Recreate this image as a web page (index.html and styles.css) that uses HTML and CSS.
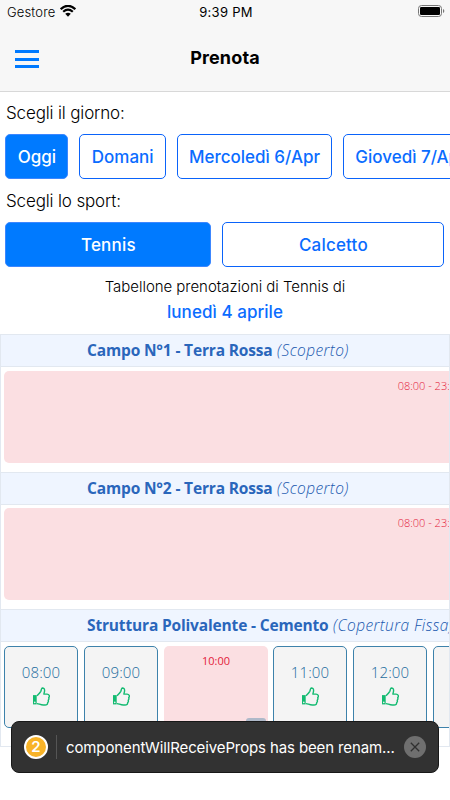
FILE: index.html
```html
<!DOCTYPE html>
<html lang="it">
<head>
<meta charset="utf-8">
<title>Prenota</title>
<link rel="stylesheet" href="styles.css">
</head>
<body>
<svg class="defs" aria-hidden="true">
  <symbol id="thumb" viewBox="0 0 18 19">
    <path d="M1 8.1h3.7v9.3H1z" fill="currentColor"/>
    <circle cx="2.8" cy="15.4" r=".8" fill="#f4f4f4"/>
    <path d="M5 16.600c2 0 3.300 1.400 6.300 1.400h1.700c1.800 0 2.700-.8 2.600-2.300 .8-.6 1-1.500.6-2.400 .8-.8.9-1.700.5-2.600 1.300-1.500.4-3.600-1.600-3.600h-3.300c.4-1.300.8-2.200.8-3.500 0-1.800-.9-2.700-2.500-2.600-.9.700-.8 2.300-1.300 3.300C7.900 5.800 6.500 7.200 5 8.700" fill="none" stroke="currentColor" stroke-width="1.4" stroke-linejoin="round"/>
  </symbol>
</svg>
<header class="top">
  <div class="status">
    <div class="carrier"><span>Gestore</span>
      <svg width="16" height="12" viewBox="0 0 16 12"><path d="M.7 4.200Q8-2.600 15.300 4.200M3.200 6.800Q8 2.500 12.800 6.800" fill="none" stroke="#000" stroke-width="2.200"/><path d="M5.200 8.800Q8 6.500 10.800 8.800L8 11.700z"/></svg>
    </div>
    <span class="clock">9:39 PM</span>
    <svg class="battery" width="27" height="12" viewBox="0 0 27 12"><rect x=".5" y=".5" width="23" height="11" rx="3" fill="none" stroke="#777"/><rect x="2" y="2" width="20" height="8" rx="1.300"/><path d="M25 4v4q1.300-.5 1.300-2T25 4z" fill="#777"/></svg>
  </div>
  <div class="nav">
    <div class="menu"><i></i><i></i><i></i></div>
    <h1>Prenota</h1>
  </div>
</header>
<main>
  <p class="label day-label"><span>Scegli il giorno:</span></p>
  <div class="days">
    <button class="btn on oggi"><span>Oggi</span></button>
    <button class="btn domani"><span>Domani</span></button>
    <button class="btn merc"><span>Mercoledì 6/Apr</span></button>
    <button class="btn giov"><span>Giovedì 7/Apr</span></button>
  </div>
  <p class="label sport-label"><span>Scegli lo sport:</span></p>
  <div class="sports">
    <button class="btn on"><span>Tennis</span></button>
    <button class="btn"><span>Calcetto</span></button>
  </div>
  <p class="caption"><span>Tabellone prenotazioni di Tennis di</span></p>
  <p class="date"><span>lunedì 4 aprile</span></p>
  <div class="board">
    <section class="court first">
      <h2><span><b>Campo N°1 - Terra Rossa</b> <em>(Scoperto)</em></span></h2>
      <div class="slots"><div class="busy full">08:00 - 23:00</div></div>
    </section>
    <section class="court">
      <h2><span><b>Campo N°2 - Terra Rossa</b> <em>(Scoperto)</em></span></h2>
      <div class="slots"><div class="busy full">08:00 - 23:00</div></div>
    </section>
    <section class="court">
      <h2><span><b>Struttura Polivalente - Cemento</b> <em>(Copertura Fissa)</em></span></h2>
      <div class="slots">
        <div class="free"><span>08:00</span><svg><use href="#thumb"/></svg></div>
        <div class="free"><span>09:00</span><svg><use href="#thumb"/></svg></div>
        <div class="busy hour">10:00<i class="tag"></i></div>
        <div class="free"><span>11:00</span><svg><use href="#thumb"/></svg></div>
        <div class="free"><span>12:00</span><svg><use href="#thumb"/></svg></div>
        <div class="free"><span>13:00</span><svg><use href="#thumb"/></svg></div>
      </div>
    </section>
  </div>
</main>
<div class="toast">
  <span class="count">2</span>
  <span class="rule"></span>
  <span class="msg">componentWillReceiveProps has been renam...</span>
  <svg width="22" height="22" viewBox="0 0 22 22"><circle cx="11" cy="11" r="11" fill="#6f6f6f"/><path d="M6.800 6.800l8.400 8.400M15.200 6.800l-8.400 8.400" stroke="#303030" stroke-width="1.300"/></svg>
</div>
</body>
</html>
```
FILE: styles.css
```css
* { box-sizing: border-box; }
body { margin: 0; width: 450px; height: 800px; overflow: hidden; position: relative; background: #fff; color: #000; font-family: Inter, "Liberation Sans", sans-serif; }
p, h1, h2 { margin: 0; font-weight: 400; }
svg { display: block; flex: none; }
.defs { position: absolute; width: 0; height: 0; }
.top { height: 92px; background: #f7f7f7; border-bottom: 1px solid #d8d8d8; }
.status { height: 23px; display: grid; grid-template-columns: 1fr auto 1fr; align-items: center; padding: 0 5px 0 7px; font-size: 13px; }
.carrier { display: flex; gap: 5px; align-items: center; font-weight: 350; letter-spacing: .15px; }
.carrier svg { margin-top: -2px; }
.clock { letter-spacing: .3px; font-weight: 400; }
.battery { justify-self: end; margin-top: -1px; }
.nav { height: 68px; display: grid; grid-template-columns: 1fr auto 1fr; align-items: center; padding: 0 15px; }
.menu { display: flex; flex-direction: column; gap: 4.500px; width: 24px; margin-top: 4px; }
.menu i { height: 3px; background: #007aff; }
h1 { font-size: 18px; font-weight: 650; letter-spacing: .15px; }
.label { padding-left: 6px; font-size: 17px; font-weight: 350; line-height: 22px; letter-spacing: -.15px; }
.day-label { margin-top: 10px; }
.days { display: flex; gap: 11px; padding-left: 5.400px; margin-top: 10px; overflow: hidden; }
.btn { height: 45px; flex: none; padding: 0; border: 1px solid #0a63fa; border-radius: 5px; background: #fff; color: #0a6cff; font: 500 17px Inter, sans-serif; white-space: nowrap; }
.btn.on { background: #007aff; color: #fff; border-color: #3c87ff; }
.oggi { width: 63px; }
.domani { width: 86.600px; }
.merc { width: 155px; }
.giov { width: 135px; }
.sport-label { margin-top: 11px; }
.sports { display: grid; grid-template-columns: 206px 222px; gap: 11px; padding-left: 5.400px; margin-top: 10px; }
.sports .btn { letter-spacing: .2px; }
.caption { text-align: center; font-size: 15px; font-weight: 350; line-height: 20px; margin-top: 10px; letter-spacing: -.04px; }
.date { text-align: center; font-size: 17px; font-weight: 500; line-height: 24px; margin-top: 3px; color: #0a6cff; letter-spacing: .05px; }
.board { margin-top: 10px; width: 450px; height: 413px; overflow: hidden; border: 1px solid #e2e8f0; border-top: 0; }
.court { height: 137.500px; }
.court h2 { height: 33px; padding-left: 86px; border: solid #e2e8f0; border-width: 1px 0; background: #eff5ff; color: #2a66bb; font: 15.500px/31px "Open Sans", sans-serif; white-space: nowrap; }
.court b { font-weight: 700; letter-spacing: -.16px; }
.court em { font-weight: 350; letter-spacing: .4px; color: #2058ae; margin-left: .5px; }
.slots { display: flex; gap: 6px; padding: 3.500px 0 0 3px; overflow: hidden; }
.busy { flex: none; background: #fbdfe2; border-radius: 5px; color: #e3213a; font: 11px/15px "Open Sans", sans-serif; text-align: center; position: relative; }
.full { height: 92px; width: 852px; padding-top: 7px; font-weight: 350; }
.hour { width: 104px; height: 82px; padding-top: 7px; margin-right: -1px; }
.tag { position: absolute; right: 2px; bottom: 5px; width: 20px; height: 5px; border-radius: 3px 3px 0 0; background: #afb9c9; }
.free { width: 74px; height: 82px; flex: none; border: 1px solid #3d82ab; border-radius: 5px; background: #f4f4f4; color: #1d6c9e; display: flex; flex-direction: column; align-items: center; padding-top: 14px; font: 350 15px/22px "Open Sans", sans-serif; letter-spacing: .1px; }
.free svg { width: 18px; height: 19px; margin: 4px 1px 0 0; color: #13bb71; }
.toast { position: absolute; left: 11px; top: 721px; width: 428px; height: 52px; display: flex; align-items: center; padding-left: 12px; background: #323232; border: 1px solid #181818; border-radius: 8px; color: #fff; }
.count { width: 24px; height: 24px; border: 2px solid #fff; border-radius: 50%; background: #f8b328; font-size: 15px; font-weight: 600; line-height: 20px; text-align: center; }
.rule { width: 1px; height: 24px; background: #555; margin: 0 9px 0 8px; }
.msg { width: 338px; font-size: 15px; letter-spacing: -.12px; white-space: nowrap; }
```
